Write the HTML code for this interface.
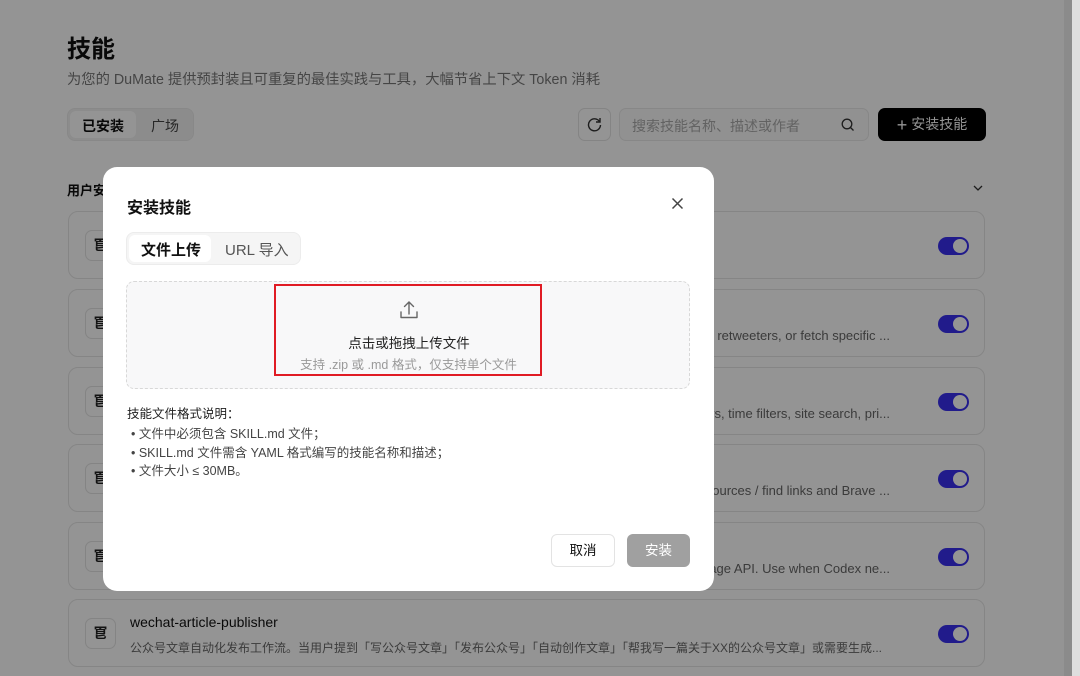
<!DOCTYPE html>
<html><head><meta charset="utf-8">
<style>
*{box-sizing:border-box;margin:0;padding:0}
body{width:1080px;height:676px;overflow:hidden;position:relative;background:#fff;font-family:"Liberation Sans","Noto Sans CJK SC",sans-serif;color:#111}
.page{position:absolute;inset:0;background:#fff}
.abs{position:absolute}
.card{position:absolute;left:68px;width:917px;height:68px;border:1px solid #e6e6e6;border-radius:10px;background:#fff}
.card .ic{position:absolute;left:16px;top:18px;width:31px;height:31px;border:1px solid #e3e3e3;border-radius:7px;font-size:14px;text-align:center;line-height:29px;font-weight:bold;color:#222}
.card .t{position:absolute;left:61px;top:14px;font-size:14px;color:#111}
.card .d{position:absolute;left:61px;top:38px;font-size:12.5px;color:#666;white-space:nowrap}
.card .dr{position:absolute;right:94px;top:38px;font-size:13px;color:#666;white-space:nowrap}
.tog{position:absolute;right:15px;top:25px;width:31px;height:18px;border-radius:9px;background:#3a30f0}
.tog:after{content:"";position:absolute;right:2px;top:2px;width:14px;height:14px;border-radius:50%;background:#fff}
.ov{position:absolute;left:0;top:0;width:1080px;height:676px;background:rgba(0,0,0,0.42)}
.sb{position:absolute;left:1064px;top:0;width:8px;height:676px;background:rgba(0,0,0,0.06)}
.sb2{position:absolute;left:1072px;top:0;width:8px;height:676px;background:#dedede}
.modal{position:absolute;left:103px;top:167px;width:611px;height:424px;background:#fff;border-radius:14px}
</style></head><body>
<div class="page">
<div class="abs" style="left:67px;top:29px;font-size:24px;font-weight:bold">技能</div>
<div class="abs" style="left:67px;top:68px;font-size:14.3px;color:#777">为您的 DuMate 提供预封装且可重复的最佳实践与工具，大幅节省上下文 Token 消耗</div>
<div class="abs" style="left:67px;top:108px;width:127px;height:33px;background:#f2f2f2;border-radius:8px;border:1px solid #ebebeb"></div>
<div class="abs" style="left:70px;top:111px;width:66px;height:27px;background:#fff;border-radius:6px"></div>
<div class="abs" style="left:82px;top:116px;font-size:14px;font-weight:bold">已安装</div>
<div class="abs" style="left:151px;top:116px;font-size:14px;color:#444">广场</div>
<div class="abs" style="left:578px;top:108px;width:33px;height:33px;border:1px solid #e3e3e3;border-radius:7px"></div>
<svg class="abs" style="left:586px;top:116px" width="17" height="17" viewBox="0 0 17 17"><path d="M13.5 5.5A6 6 0 1 0 14.5 9" fill="none" stroke="#333" stroke-width="1.4"/><path d="M14 2v4h-4" fill="none" stroke="#333" stroke-width="1.4"/></svg>
<div class="abs" style="left:619px;top:108px;width:250px;height:33px;border:1px solid #e8e8e8;border-radius:7px;background:#fafafa"></div>
<div class="abs" style="left:632px;top:116px;font-size:14px;color:#aaa">搜索技能名称、描述或作者</div>
<svg class="abs" style="left:841px;top:118px" width="14" height="14" viewBox="0 0 14 14"><circle cx="6" cy="6" r="4.8" fill="none" stroke="#333" stroke-width="1.3"/><path d="M9.5 9.5L12.5 12.5" stroke="#333" stroke-width="1.3"/></svg>
<div class="abs" style="left:878px;top:108px;width:108px;height:33px;background:#000;border-radius:7px;color:#fff;font-size:14px;line-height:33px;text-align:center"><span style="font-size:18px;vertical-align:-2px">+</span> 安装技能</div>
<div class="abs" style="left:67px;top:180px;font-size:13px;font-weight:bold">用户安装</div>
<svg class="abs" style="left:972px;top:183px" width="12" height="10"><path d="M2 3l4 4 4-4" fill="none" stroke="#333" stroke-width="1.3"/></svg>

<div class="card" style="top:211px"><div class="ic">冟</div><div class="t">agent-browser</div><div class="d">Browser automation tool</div><div class="tog"></div></div>
<div class="card" style="top:289px"><div class="ic">冟</div><div class="t">x-search</div><div class="dr">retweeters, or fetch specific ...</div><div class="tog"></div></div>
<div class="card" style="top:367px"><div class="ic">冟</div><div class="t">web-search</div><div class="dr">rs, time filters, site search, pri...</div><div class="tog"></div></div>
<div class="card" style="top:444px"><div class="ic">冟</div><div class="t">brave-search</div><div class="dr">ources / find links and Brave ...</div><div class="tog"></div></div>
<div class="card" style="top:522px"><div class="ic">冟</div><div class="t">imagegen</div><div class="dr">nage API. Use when Codex ne...</div><div class="tog"></div></div>
<div class="card" style="top:599px"><div class="ic">冟</div><div class="t">wechat-article-publisher</div><div class="d" style="font-size:12px;top:39px">公众号文章自动化发布工作流。当用户提到「写公众号文章」「发布公众号」「自动创作文章」「帮我写一篇关于XX的公众号文章」或需要生成...</div><div class="tog"></div></div>
</div>
<div class="ov"></div><div class="sb"></div><div class="sb2"></div>

<div class="modal">
<div class="abs" style="left:24px;top:27px;font-size:16px;font-weight:bold;color:#111">安装技能</div>
<svg class="abs" style="left:568px;top:30px" width="13" height="13"><path d="M1.5 1.5l10 10M11.5 1.5l-10 10" stroke="#444" stroke-width="1.5"/></svg>
<div class="abs" style="left:23px;top:65px;width:175px;height:33px;background:#f5f5f5;border:1px solid #ececec;border-radius:8px"></div>
<div class="abs" style="left:26px;top:68px;width:82px;height:27px;background:#fff;border-radius:6px"></div>
<div class="abs" style="left:38px;top:72px;font-size:15px;font-weight:bold">文件上传</div>
<div class="abs" style="left:122px;top:72px;font-size:15px;color:#555">URL 导入</div>
<div class="abs" style="left:23px;top:114px;width:564px;height:108px;border:1px dashed #d8d8d8;border-radius:8px;background:#f8f8f9"></div>
<div class="abs" style="left:171px;top:117px;width:268px;height:92px;border:2px solid #e01b24"></div>
<svg class="abs" style="left:295px;top:132px" width="22" height="22" viewBox="0 0 22 22"><path d="M11 15V3M6.5 7.5L11 3l4.5 4.5M3 13v5.5h16V13" fill="none" stroke="#666" stroke-width="1.4" stroke-linecap="round" stroke-linejoin="round"/></svg>
<div class="abs" style="left:0;width:611px;text-align:center;top:165px;font-size:13.5px;color:#222;padding-left:1px">点击或拖拽上传文件</div>
<div class="abs" style="left:0;width:611px;text-align:center;top:187px;font-size:12.5px;color:#999">支持 .zip 或 .md 格式，仅支持单个文件</div>
<div class="abs" style="left:24px;top:236px;font-size:12.5px;color:#222">技能文件格式说明：</div>
<div class="abs" style="left:28px;top:258px;font-size:12.5px;color:#444;line-height:18.5px">
• 文件中必须包含 SKILL.md 文件；<br>• SKILL.md 文件需含 YAML 格式编写的技能名称和描述；<br>• 文件大小 ≤ 30MB。</div>
<div class="abs" style="left:448px;top:367px;width:64px;height:33px;border:1px solid #e3e3e3;border-radius:6px;text-align:center;line-height:31px;font-size:13.5px;color:#111">取消</div>
<div class="abs" style="left:524px;top:367px;width:63px;height:33px;background:#a0a0a0;border-radius:6px;text-align:center;line-height:33px;font-size:13.5px;color:#fff">安装</div>
</div>
</body></html>
